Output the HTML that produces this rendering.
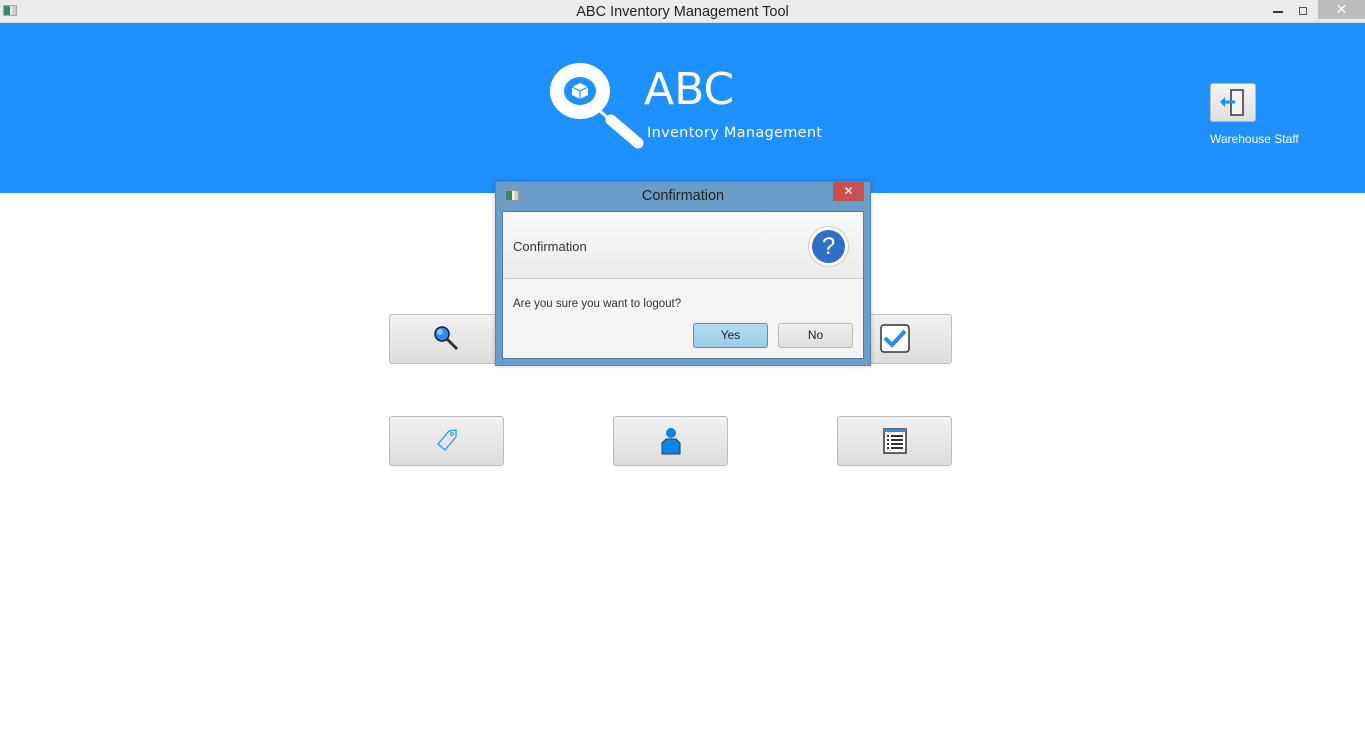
<!DOCTYPE html>
<html><head><meta charset="utf-8"><style>
*{margin:0;padding:0;box-sizing:border-box}
body{width:1365px;height:751px;position:relative;background:#fff;font-family:"Liberation Sans",sans-serif;overflow:hidden}
.abs{position:absolute}
.btn{position:absolute;width:115px;height:50px;border:1px solid #bcbcbc;border-radius:3px;background:linear-gradient(#f1f1f1,#dcdcdc)}
.btn svg{position:absolute;left:50%;top:50%;transform:translate(-50%,-50%)}
</style></head><body>
<div class="abs" style="left:0;top:0;width:1365px;height:23px;background:#ebebeb;border-bottom:1px solid #d9d9d9"></div>
<div class="abs" style="left:3px;top:5px;width:14px;height:11px;border:1px solid #aaa;background:linear-gradient(90deg,#3a8a6a 0 50%,#e8e8e8 50% 70%,#ccc 70%)"></div>
<div class="abs" style="left:0;top:4px;width:1365px;text-align:center;font-size:14.5px;color:#222">ABC Inventory Management Tool</div>
<div class="abs" style="left:1273px;top:11px;width:10px;height:2px;background:#333"></div>
<div class="abs" style="left:1299px;top:7px;width:8px;height:8px;border:1px solid #555"></div>
<div class="abs" style="left:1318px;top:0;width:47px;height:19px;background:#bdbdbd;color:#fff;text-align:center;font-size:14px;line-height:19px">✕</div>
<div class="abs" style="left:0;top:23px;width:1365px;height:170px;background:#1e90ff"></div>
<svg class="abs" style="left:545px;top:60px" width="100" height="90" viewBox="0 0 100 90">
<ellipse cx="35" cy="31" rx="23" ry="21" fill="none" stroke="#fff" stroke-width="14"/>
<line x1="54" y1="50" x2="65" y2="60" stroke="#fff" stroke-width="3"/>
<line x1="66" y1="60" x2="93" y2="83" stroke="#fff" stroke-width="11" stroke-linecap="round"/>
<polygon points="35,23 43,27 43,35 35,39 27,35 27,27" fill="#fff"/>
<polyline points="27,27 35,31 43,27" fill="none" stroke="#1e90ff" stroke-width="1.2"/>
<line x1="35" y1="31" x2="35" y2="39" stroke="#1e90ff" stroke-width="1.2"/>
</svg>
<div class="abs" style="left:644px;top:64px;font-size:44px;color:#fff;font-family:'DejaVu Sans','Liberation Sans',sans-serif">ABC</div>
<div class="abs" style="left:647px;top:125px;font-size:14.5px;color:#fff;font-family:'DejaVu Sans','Liberation Sans',sans-serif;letter-spacing:0.3px">Inventory Management</div>
<div class="abs" style="left:1210px;top:83px;width:46px;height:39px;border:1px solid #bbb;border-radius:3px;background:linear-gradient(#f4f4f4,#dedede)">
<svg width="44" height="37"><rect x="20" y="6" width="12" height="25" fill="#f4f4f4" stroke="#333" stroke-width="1.5"/><line x1="11" y1="18" x2="24" y2="18" stroke="#1e90ff" stroke-width="3"/><polygon points="9,18 14,13 14,23" fill="#1e90ff"/></svg></div>
<div class="abs" style="left:1210px;top:132px;font-size:12px;color:#fff">Warehouse Staff</div>
<div class="btn" style="left:389px;top:314px"><svg width="30" height="30"><line x1="14" y1="14" x2="25" y2="25" stroke="#333" stroke-width="3"/><circle cx="10" cy="10" r="7" fill="#2a8cf0" stroke="#123" stroke-width="1.5"/><circle cx="8" cy="8" r="3" fill="#8cc8ff"/></svg></div>
<div class="btn" style="left:837px;top:314px"><svg width="30" height="30"><rect x="1" y="1" width="28" height="27" rx="3" fill="#fff" stroke="#333" stroke-width="1.5"/><polyline points="5,14 12,21 25,7" fill="none" stroke="#1e90ff" stroke-width="4"/></svg></div>
<div class="btn" style="left:389px;top:416px"><svg width="24" height="26"><path d="M3,16 L14,3 L21,2 L21,9 L10,22 Z" fill="none" stroke="#1ea0f0" stroke-width="1.3"/><circle cx="17" cy="6" r="1.5" fill="none" stroke="#1ea0f0"/></svg></div>
<div class="btn" style="left:613px;top:416px"><svg width="20" height="28"><circle cx="10" cy="6" r="5" fill="#0e84e8"/><path d="M1,27 V16 L5,12 H15 L19,16 V27 Z" fill="#0e84e8" stroke="#245" stroke-width="1"/></svg></div>
<div class="btn" style="left:837px;top:416px"><svg width="24" height="26"><rect x="1" y="1" width="22" height="24" fill="#fff" stroke="#333" stroke-width="1.5"/><rect x="1" y="1" width="22" height="3" fill="#1e90ff"/><g fill="#333"><rect x="4" y="7" width="2" height="2"/><rect x="8" y="7" width="12" height="2"/><rect x="4" y="11" width="2" height="2"/><rect x="8" y="11" width="12" height="2"/><rect x="4" y="15" width="2" height="2"/><rect x="8" y="15" width="12" height="2"/><rect x="4" y="19" width="2" height="2"/><rect x="8" y="19" width="12" height="2"/></g></svg></div>
<div class="abs" style="left:495px;top:181px;width:376px;height:185px;background:#6a9ec9;border:1px solid #5585b5;box-shadow:0 0 4px rgba(0,0,0,.25)"></div>
<div class="abs" style="left:505px;top:190px;width:14px;height:11px;border:1px solid #999;background:linear-gradient(90deg,#3a8a6a 0 50%,#eee 50% 70%,#ccc 70%)"></div>
<div class="abs" style="left:495px;top:188px;width:376px;text-align:center;font-size:14.5px;color:#222">Confirmation</div>
<div class="abs" style="left:833px;top:182px;width:31px;height:19px;background:#c75050;color:#fff;text-align:center;font-size:12px;line-height:19px">✕</div>
<div class="abs" style="left:502px;top:211px;width:362px;height:148px;background:#f4f4f4;border:1px solid #4e7ea8"></div>
<div class="abs" style="left:503px;top:212px;width:360px;height:67px;background:linear-gradient(#f8f8f8,#ececec);border-bottom:1px solid #cfcfcf"></div>
<div class="abs" style="left:513px;top:239px;font-size:13px;color:#333">Confirmation</div>
<div class="abs" style="left:808px;top:226px;width:41px;height:41px;border-radius:50%;background:#fff;border:1px solid #ccc"></div>
<div class="abs" style="left:812px;top:230px;width:33px;height:33px;border-radius:50%;background:#2e6fc8;color:#fff;text-align:center;font-size:24px;line-height:33px">?</div>
<div class="abs" style="left:513px;top:298px;font-size:11.5px;color:#333">Are you sure you want to logout?</div>
<div class="abs" style="left:693px;top:323px;width:75px;height:25px;border:1px solid #3c9ad2;border-radius:3px;background:linear-gradient(#b4dcf0,#9acde6);font-size:12px;text-align:center;line-height:23px;color:#222">Yes</div>
<div class="abs" style="left:778px;top:323px;width:75px;height:25px;border:1px solid #bbb;border-radius:3px;background:linear-gradient(#f0f0f0,#dddddd);font-size:12px;text-align:center;line-height:23px;color:#222">No</div>
</body></html>
